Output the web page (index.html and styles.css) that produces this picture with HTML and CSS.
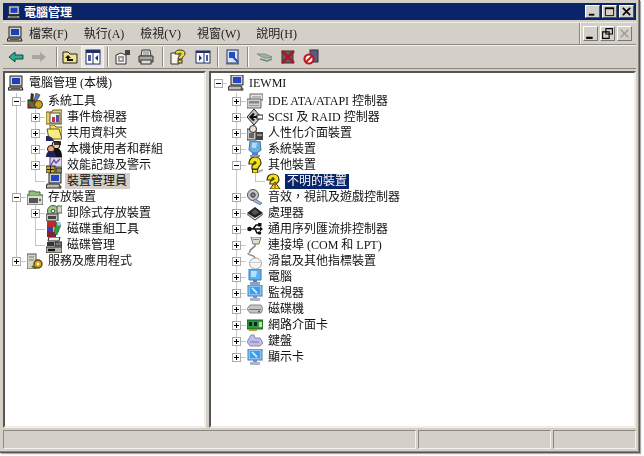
FILE: index.html
```html
<!DOCTYPE html>
<html lang="zh-Hant">
<head>
<meta charset="utf-8">
<title>電腦管理</title>
<link rel="stylesheet" href="styles.css">
</head>
<body>
<svg class="defs" xmlns="http://www.w3.org/2000/svg">
  <symbol id="i-comp" viewBox="0 0 16 16"><rect x="2" y="1" width="12" height="10" fill="#d4d0c8" stroke="#222"/><rect x="4" y="3" width="8" height="6" fill="#1a3fc0"/><path d="M1 12h13l1 3H0z" fill="#b8b4ac" stroke="#222"/><path d="M3 13.500h9" stroke="#555"/></symbol>
  <symbol id="i-tools" viewBox="0 0 16 16"><rect x="1" y="7" width="8" height="8" fill="#b5302a" stroke="#222"/><path d="M4 0l3 1-1 8-3-1z" fill="#333"/><path d="M9 0l4 2-4 7-2-1z" fill="#5a7fa8" stroke="#222" stroke-width=".6"/><circle cx="11.500" cy="11.500" r="4" fill="#c6a21e" stroke="#333"/><path d="M2 9l5 5" stroke="#2c8a3c" stroke-width="2.400"/></symbol>
  <symbol id="i-event" viewBox="0 0 16 16"><path d="M0 3h6l1-2h9v14H0z" fill="#e6cf6a" stroke="#6b5a1c"/><rect x="4" y="4" width="10" height="10" fill="#f4f4f0" stroke="#555"/><rect x="6" y="8" width="3" height="5" fill="#c03838"/><rect x="10" y="6" width="3" height="7" fill="#5d4aa0"/></symbol>
  <symbol id="i-share" viewBox="0 0 16 16"><path d="M4 0h4l2 2h6v10H4z" fill="#f2e05e" stroke="#6b5a1c"/><path d="M1 4h12l3 10H3z" fill="#f6ea82" stroke="#6b5a1c"/><path d="M0 11c5 0 7 2 8 5H0z" fill="#1c2c6c"/></symbol>
  <symbol id="i-users" viewBox="0 0 16 16"><circle cx="10" cy="4" r="4" fill="#f1c9a0" stroke="#111"/><path d="M5 16c0-7 2-9 5-9s6 2 6 9z" fill="#111"/><circle cx="5" cy="8" r="3.500" fill="#e3a878" stroke="#111"/><path d="M0 16c0-4 2-6 5-6s5 2 5 6z" fill="#20205c"/><path d="M8 0h7v4H8z" fill="#111" opacity=".8"/></symbol>
  <symbol id="i-perf" viewBox="0 0 16 16"><rect x="4" y="0" width="12" height="10" fill="#dcd6ee" stroke="#4a3f86"/><path d="M5 8l3-5 2 3 4-4" stroke="#6a3fa0" fill="none" stroke-width="1.300"/><rect x="0" y="9" width="9" height="7" fill="#c8a82a" stroke="#222"/><path d="M1 12.500h7M4.500 9v7" stroke="#222"/><path d="M10 11h6v5h-6z" fill="#8a8a52" stroke="#333"/></symbol>
  <symbol id="i-dev" viewBox="0 0 16 16"><rect x="3" y="0" width="12" height="10" fill="#d4d0c8" stroke="#222"/><rect x="5" y="2" width="8" height="6" fill="#2244c8"/><path d="M1 11h12l2 4H0z" fill="#c0bcb4" stroke="#222"/><circle cx="14" cy="14" r="1.500" fill="#555"/></symbol>
  <symbol id="i-store" viewBox="0 0 16 16"><rect x="0" y="6" width="16" height="10" fill="#dcdcd4" stroke="#444"/><path d="M2 6V2h5l2 1h4v3" fill="#8fc07a" stroke="#4a6d3a"/><rect x="2" y="9" width="9" height="5" fill="#555"/><circle cx="13" cy="11" r="1.200" fill="#2c8a3c"/></symbol>
  <symbol id="i-remov" viewBox="0 0 16 16"><circle cx="7" cy="6" r="5.500" fill="#9fcc88" stroke="#3a5a3a"/><circle cx="7" cy="6" r="1.800" fill="#fff" stroke="#444"/><rect x="0" y="9" width="12" height="7" fill="#c4c4bc" stroke="#333"/><rect x="2" y="11" width="8" height="3" fill="#444"/><path d="M11 1h5v7h-5z" fill="#d8d8d0" stroke="#555"/></symbol>
  <symbol id="i-defrag" viewBox="0 0 16 16"><rect x="1" y="0" width="9" height="6" fill="#c0282c"/><rect x="1" y="6" width="6" height="5" fill="#2c40b0"/><rect x="7" y="6" width="6" height="5" fill="#e0c020"/><rect x="1" y="11" width="9" height="5" fill="#8c1c30"/><path d="M10 1l5 3-4 10-3-1z" fill="#2c9c48" stroke="#333" stroke-width=".5"/><circle cx="13" cy="3" r="2" fill="#9cc4f0"/></symbol>
  <symbol id="i-disk" viewBox="0 0 16 16"><path d="M3 0h11l-1 4H2z" fill="#eee" stroke="#222"/><rect x="1" y="5" width="7" height="4" fill="#333"/><rect x="9" y="5" width="7" height="4" fill="#777" stroke="#222"/><path d="M0 10h16v6H0z" fill="#b8b4a8" stroke="#222"/><path d="M2 13h7" stroke="#111" stroke-width="2.400"/></symbol>
  <symbol id="i-serv" viewBox="0 0 16 16"><rect x="0" y="1" width="9" height="15" fill="#d8d4c4" stroke="#555"/><path d="M2 4h5M2 7h5" stroke="#777"/><circle cx="11" cy="11" r="4" fill="#d8a818" stroke="#5a4410" stroke-width="1.400"/><circle cx="11" cy="11" r="1.200" fill="#fff"/><path d="M5 13l4 3" stroke="#4a6d3a" stroke-width="2"/></symbol>
  <symbol id="i-ide" viewBox="0 0 16 16"><path d="M3 1h13v6H3z" fill="#e4e4e4" stroke="#666"/><path d="M5 4h9" stroke="#888"/><path d="M0 6h14v9H0z" fill="#d0d0d0" stroke="#666"/><rect x="2" y="8" width="10" height="2.500" fill="#888"/><path d="M2 12.500h10" stroke="#999"/></symbol>
  <symbol id="i-scsi" viewBox="0 0 16 16"><path d="M7 0l7 8-7 8-7-8z" fill="#c8c8c8" stroke="#222"/><path d="M4 8h11M7 4.500L3.500 8 7 11.500" stroke="#111" stroke-width="2.200" fill="none"/><rect x="10" y="6" width="6" height="4" fill="#f4f4f4" stroke="#222"/></symbol>
  <symbol id="i-hid" viewBox="0 0 16 16"><rect x="0" y="4" width="9" height="11" fill="#c8c8c0" stroke="#333"/><circle cx="6" cy="4" r="3.500" fill="#e4e4dc" stroke="#333"/><rect x="9" y="7" width="7" height="8" fill="#444"/><path d="M10 10h5" stroke="#ddd"/><path d="M2 8h5v5H2z" fill="#666"/></symbol>
  <symbol id="i-sys" viewBox="0 0 16 16"><path d="M3 0h10l1 9-4 3H6L2 9z" fill="#6aaee8" stroke="#3d6fa8"/><path d="M5 2h5l-1 5H5z" fill="#b4dcf8"/><rect x="5" y="12" width="6" height="2" fill="#5a7ec0"/><rect x="3" y="14" width="10" height="2" fill="#8a94a8"/></symbol>
  <symbol id="i-q" viewBox="0 0 16 16"><path d="M2 6c0-4 3-6 6-6s6 2 6 6c0 3-3 3-3 6H5V9c1-2 4-2 4-3S7 4 7 6v1H2z" fill="#f2e21c" stroke="#3a3400" stroke-width="1.200"/><rect x="5.500" y="12.500" width="5" height="3.500" fill="#f2e21c" stroke="#3a3400"/><path d="M10 14l6-2v2l-5 2z" fill="#888" opacity=".7"/></symbol>
  <symbol id="i-unk" viewBox="0 0 16 16"><path d="M1 7c0-4 3-6 6-6s6 2 6 6c0 2-2 3-3 4H4V9c1-2 4-2 4-3S6 4 6 6v1z" fill="#f2e21c" stroke="#3a3400" stroke-width="1.200"/><path d="M4 16l5-7 5 7z" fill="#f2e21c" stroke="#3a3400"/><path d="M9 11v2.500M9 14.200v1" stroke="#b01010" stroke-width="1.300"/></symbol>
  <symbol id="i-audio" viewBox="0 0 16 16"><circle cx="6" cy="6" r="5.500" fill="#c4c4cc" stroke="#555"/><circle cx="6" cy="6" r="2.200" fill="#888" stroke="#333"/><path d="M8 10l7 4-2 2-7-4z" fill="#8cb4e4" stroke="#555" stroke-width=".6"/></symbol>
  <symbol id="i-cpu" viewBox="0 0 16 16"><path d="M8 2l8 6-8 5-8-5z" fill="#222"/><path d="M8 4l4 3.500-4 2.500-4-2.500z" fill="#555"/><path d="M0 9l8 6 8-6" stroke="#666" fill="none" stroke-width="1.200"/></symbol>
  <symbol id="i-usb" viewBox="0 0 16 16"><path d="M2 8h12M6 8l3-4h3M8 8l2 4h2" stroke="#111" stroke-width="1.600" fill="none"/><circle cx="2.500" cy="8" r="2.300" fill="#111"/><rect x="11" y="2" width="3.500" height="3.500" fill="#111"/><circle cx="12.500" cy="12" r="1.800" fill="#111"/><path d="M13 5.500l3 2.500-3 2.500z" fill="#111"/></symbol>
  <symbol id="i-port" viewBox="0 0 16 16"><path d="M4 0h10l-2 7H6z" fill="#e0e0c8" stroke="#777"/><path d="M6 2.500h6" stroke="#888"/><path d="M8.500 7c0 5-6 3-6 9" stroke="#888" fill="none" stroke-width="1.500"/></symbol>
  <symbol id="i-mouse" viewBox="0 0 16 16"><path d="M1 0c0 3 6 1 7 5" stroke="#888" fill="none" stroke-width="1.300"/><ellipse cx="8.500" cy="10.500" rx="6" ry="5.500" fill="#f6f6f6" stroke="#a0a0a0"/><path d="M3 9.500h11" stroke="#ccc"/></symbol>
  <symbol id="i-pc" viewBox="0 0 16 16"><path d="M2 0h12v11H2z" fill="#5cb0f0" stroke="#3d7ab8"/><path d="M4 2h6l-1 6H4z" fill="#b8e0fa"/><rect x="6" y="11" width="4" height="2" fill="#5a7ec0"/><rect x="3" y="13" width="10" height="3" fill="#8ca0c0"/></symbol>
  <symbol id="i-mon" viewBox="0 0 16 16"><rect x="1" y="0" width="14" height="11" fill="#8cc4f0" stroke="#4a7cb0"/><rect x="3" y="2" width="10" height="7" fill="#3c9ce8"/><path d="M5 3l5 5" stroke="#c8e8fc" stroke-width="1.800"/><rect x="6" y="11" width="4" height="2" fill="#7a94b8"/><rect x="3" y="13" width="10" height="3" fill="#a8b4c8"/></symbol>
  <symbol id="i-drive" viewBox="0 0 16 16"><path d="M3 4h11l2 4-2 4H3L0 8z" fill="#c4c4c0" stroke="#888"/><path d="M2 8.500h12" stroke="#777"/><circle cx="12" cy="10.500" r="1" fill="#555"/></symbol>
  <symbol id="i-net" viewBox="0 0 16 16"><rect x="0" y="3" width="16" height="9" fill="#2f9a3c" stroke="#1a5c24"/><rect x="2" y="5" width="3" height="4" fill="#123"/><rect x="7" y="5" width="3" height="4" fill="#123"/><rect x="12" y="5" width="3" height="5" fill="#c8e0a0"/><path d="M2 13h8" stroke="#b89a20" stroke-width="2"/></symbol>
  <symbol id="i-kbd" viewBox="0 0 16 16"><path d="M4 2h3l1 3h5l3 5-3 3H3L0 9z" fill="#c0bce8" stroke="#8a86b8"/><path d="M3 9h9" stroke="#7a76a8"/></symbol>
  <symbol id="i-back" viewBox="0 0 16 16"><path d="M1 8l6-5v3h8v4H7v3z" fill="#2fae8e" stroke="#0e4a3c"/></symbol>
  <symbol id="i-fwd" viewBox="0 0 16 16"><path d="M15 8L9 3v3H1v4h8v3z" fill="#a8a6a0"/></symbol>
  <symbol id="i-up" viewBox="0 0 16 16"><path d="M1 3h5l2 2h7v9H1z" fill="#f2e28a" stroke="#222"/><path d="M6 6l-3 3h2v3h6v-2H7V9h2z" fill="#111"/></symbol>
  <symbol id="i-tree" viewBox="0 0 16 16"><rect x="1" y="1" width="14" height="14" fill="#fff" stroke="#20306c"/><path d="M1 1h14v3H1z" fill="#20306c"/><path d="M8 2v13" stroke="#20306c"/><rect x="3" y="6" width="3" height="6" fill="#4a5a9c"/><path d="M13 6l-3 3 3 3z" fill="#20306c"/></symbol>
  <symbol id="i-props" viewBox="0 0 16 16"><path d="M1 6l5-2 5 2v9H1z" fill="#f4f4f0" stroke="#333"/><path d="M3 8h6M3 10h2M7 10h2M3 12h6" stroke="#444"/><rect x="10" y="1" width="5" height="5" fill="#444"/></symbol>
  <symbol id="i-print" viewBox="0 0 16 16"><path d="M4 1h8l1 6H3z" fill="#eee" stroke="#333"/><path d="M5 3h6M5 5h6" stroke="#777"/><path d="M1 7h14v6H1z" fill="#a8a8a4" stroke="#333"/><rect x="3" y="11" width="10" height="4" fill="#ddd" stroke="#333"/></symbol>
  <symbol id="i-help" viewBox="0 0 16 16"><path d="M1 4h8v11H1z" fill="#f4f4f0" stroke="#333"/><path d="M5 5c0-3 2-4 5-4s5 1 5 4c0 2-3 2-3 5H8c0-3 3-3 3-5s-2-1-2 0z" fill="#f2e21c" stroke="#333"/><rect x="8" y="11" width="4" height="3" fill="#f2e21c" stroke="#333"/></symbol>
  <symbol id="i-pane" viewBox="0 0 16 16"><rect x="1" y="2" width="14" height="12" fill="#fff" stroke="#20306c"/><path d="M1 2h14v2H1z" fill="#20306c"/><path d="M9 4v10" stroke="#20306c"/><path d="M4 6l3 3-3 3z" fill="#20306c"/><rect x="11" y="6" width="2" height="6" fill="#4a5a9c"/></symbol>
  <symbol id="i-scan" viewBox="0 0 16 16"><rect x="2" y="1" width="11" height="13" fill="#dce4f4" stroke="#20306c"/><path d="M4 3h6v6H4z" fill="#1a50c0"/><path d="M8 8l5 5" stroke="#1a50c0" stroke-width="2"/><path d="M1 14h13v1.500H1z" fill="#666"/></symbol>
  <symbol id="i-update" viewBox="0 0 16 16"><path d="M0 5h8l7 3-3 1H7z" fill="#9cb89c" stroke="#667" stroke-width=".6"/><path d="M3 10l7 2 5-2" stroke="#6a8a6a" stroke-width="1.500" fill="none"/></symbol>
  <symbol id="i-uninst" viewBox="0 0 16 16"><rect x="2" y="2" width="11" height="12" fill="#5c5c78" stroke="#333"/><path d="M2 2l12 12M14 2L2 14" stroke="#b01818" stroke-width="2.600"/></symbol>
  <symbol id="i-disable" viewBox="0 0 16 16"><rect x="7" y="1" width="8" height="12" fill="#5a5a86" stroke="#333"/><circle cx="6" cy="10" r="4.500" fill="#fff" stroke="#c01818" stroke-width="2.200"/><path d="M3 13l6-6" stroke="#c01818" stroke-width="2"/></symbol>
</svg>

<div class="window">
  <header class="titlebar">
    <svg class="ico title-ico"><use href="#i-comp"/></svg>
    <span class="title-text">電腦管理</span>
    <div class="caption">
      <span class="cbtn"><svg viewBox="0 0 12 12"><path d="M2 9.500h6" stroke="#000" stroke-width="2"/></svg></span>
      <span class="cbtn"><svg viewBox="0 0 12 12"><path d="M1.500 2.500h9v8h-9z" fill="none" stroke="#000"/><path d="M1 2.500h10" stroke="#000" stroke-width="2"/></svg></span>
      <span class="cbtn cbtn-close"><svg viewBox="0 0 12 12"><path d="M2 2l8 8M10 2l-8 8" stroke="#000" stroke-width="1.800"/></svg></span>
    </div>
  </header>

  <nav class="menubar">
    <svg class="ico menu-ico"><use href="#i-comp"/></svg>
    <span class="menu-item">檔案(F)</span>
    <span class="menu-item">執行(A)</span>
    <span class="menu-item">檢視(V)</span>
    <span class="menu-item">視窗(W)</span>
    <span class="menu-item">說明(H)</span>
    <div class="mdi">
      <span class="mbtn"><svg viewBox="0 0 12 12"><path d="M2 10h6" stroke="#000" stroke-width="2"/></svg></span>
      <span class="mbtn"><svg viewBox="0 0 12 12"><path d="M4.500 1.500h6v5h-6zM1.500 4.500h6v6h-6z" fill="#d4d0c8" stroke="#000"/></svg></span>
      <span class="mbtn"><svg viewBox="0 0 12 12"><path d="M2.500 2.500l7 7M9.500 2.500l-7 7" stroke="#a09c94" stroke-width="1.400"/></svg></span>
    </div>
  </nav>

  <div class="toolbar">
    <span class="tb"><svg class="ico"><use href="#i-back"/></svg></span>
    <span class="tb"><svg class="ico"><use href="#i-fwd"/></svg></span>
    <span class="tsep tsep-nav"></span>
    <span class="tb"><svg class="ico"><use href="#i-up"/></svg></span>
    <span class="tb tb-on"><svg class="ico"><use href="#i-tree"/></svg></span>
    <span class="tsep"></span>
    <span class="tb"><svg class="ico"><use href="#i-props"/></svg></span>
    <span class="tb"><svg class="ico"><use href="#i-print"/></svg></span>
    <span class="tsep tsep-print"></span>
    <span class="tb"><svg class="ico"><use href="#i-help"/></svg></span>
    <span class="tb tb-wide"><svg class="ico"><use href="#i-pane"/></svg></span>
    <span class="tsep tsep-pane"></span>
    <span class="tb"><svg class="ico"><use href="#i-scan"/></svg></span>
    <span class="tsep tsep-scan"></span>
    <span class="tb"><svg class="ico"><use href="#i-update"/></svg></span>
    <span class="tb"><svg class="ico"><use href="#i-uninst"/></svg></span>
    <span class="tb"><svg class="ico"><use href="#i-disable"/></svg></span>
  </div>

  <main class="panes">
    <section class="pane pane-left">
      <div class="row"><svg class="ico"><use href="#i-comp"/></svg><span class="label">電腦管理 (本機)</span></div>
      <div class="row"><span class="tw tee"><i class="exp minus"></i></span><svg class="ico"><use href="#i-tools"/></svg><span class="label">系統工具</span></div>
      <div class="row"><span class="tw pass"></span><span class="tw tee"><i class="exp plus"></i></span><svg class="ico"><use href="#i-event"/></svg><span class="label">事件檢視器</span></div>
      <div class="row"><span class="tw pass"></span><span class="tw tee"><i class="exp plus"></i></span><svg class="ico"><use href="#i-share"/></svg><span class="label">共用資料夾</span></div>
      <div class="row"><span class="tw pass"></span><span class="tw tee"><i class="exp plus"></i></span><svg class="ico"><use href="#i-users"/></svg><span class="label">本機使用者和群組</span></div>
      <div class="row"><span class="tw pass"></span><span class="tw tee"><i class="exp plus"></i></span><svg class="ico"><use href="#i-perf"/></svg><span class="label">效能記錄及警示</span></div>
      <div class="row"><span class="tw pass"></span><span class="tw ell"></span><svg class="ico"><use href="#i-dev"/></svg><span class="label label-dim">裝置管理員</span></div>
      <div class="row"><span class="tw tee"><i class="exp minus"></i></span><svg class="ico"><use href="#i-store"/></svg><span class="label">存放裝置</span></div>
      <div class="row"><span class="tw pass"></span><span class="tw tee"><i class="exp plus"></i></span><svg class="ico"><use href="#i-remov"/></svg><span class="label">卸除式存放裝置</span></div>
      <div class="row"><span class="tw pass"></span><span class="tw tee"></span><svg class="ico"><use href="#i-defrag"/></svg><span class="label">磁碟重組工具</span></div>
      <div class="row"><span class="tw pass"></span><span class="tw ell"></span><svg class="ico"><use href="#i-disk"/></svg><span class="label">磁碟管理</span></div>
      <div class="row"><span class="tw ell"><i class="exp plus"></i></span><svg class="ico"><use href="#i-serv"/></svg><span class="label">服務及應用程式</span></div>
    </section>
    <section class="pane pane-right">
      <div class="row"><span class="tw tw-first stub"><i class="exp minus"></i></span><svg class="ico"><use href="#i-dev"/></svg><span class="label">IEWMI</span></div>
      <div class="row"><span class="tw tw-first"></span><span class="tw tee"><i class="exp plus"></i></span><svg class="ico"><use href="#i-ide"/></svg><span class="label">IDE ATA/ATAPI 控制器</span></div>
      <div class="row"><span class="tw tw-first"></span><span class="tw tee"><i class="exp plus"></i></span><svg class="ico"><use href="#i-scsi"/></svg><span class="label">SCSI 及 RAID 控制器</span></div>
      <div class="row"><span class="tw tw-first"></span><span class="tw tee"><i class="exp plus"></i></span><svg class="ico"><use href="#i-hid"/></svg><span class="label">人性化介面裝置</span></div>
      <div class="row"><span class="tw tw-first"></span><span class="tw tee"><i class="exp plus"></i></span><svg class="ico"><use href="#i-sys"/></svg><span class="label">系統裝置</span></div>
      <div class="row"><span class="tw tw-first"></span><span class="tw tee"><i class="exp minus"></i></span><svg class="ico"><use href="#i-q"/></svg><span class="label">其他裝置</span></div>
      <div class="row"><span class="tw tw-first"></span><span class="tw pass"></span><span class="tw ell"></span><svg class="ico"><use href="#i-unk"/></svg><span class="label label-sel">不明的裝置</span></div>
      <div class="row"><span class="tw tw-first"></span><span class="tw tee"><i class="exp plus"></i></span><svg class="ico"><use href="#i-audio"/></svg><span class="label">音效，視訊及遊戲控制器</span></div>
      <div class="row"><span class="tw tw-first"></span><span class="tw tee"><i class="exp plus"></i></span><svg class="ico"><use href="#i-cpu"/></svg><span class="label">處理器</span></div>
      <div class="row"><span class="tw tw-first"></span><span class="tw tee"><i class="exp plus"></i></span><svg class="ico"><use href="#i-usb"/></svg><span class="label">通用序列匯流排控制器</span></div>
      <div class="row"><span class="tw tw-first"></span><span class="tw tee"><i class="exp plus"></i></span><svg class="ico"><use href="#i-port"/></svg><span class="label">連接埠 (COM 和 LPT)</span></div>
      <div class="row"><span class="tw tw-first"></span><span class="tw tee"><i class="exp plus"></i></span><svg class="ico"><use href="#i-mouse"/></svg><span class="label">滑鼠及其他指標裝置</span></div>
      <div class="row"><span class="tw tw-first"></span><span class="tw tee"><i class="exp plus"></i></span><svg class="ico"><use href="#i-pc"/></svg><span class="label">電腦</span></div>
      <div class="row"><span class="tw tw-first"></span><span class="tw tee"><i class="exp plus"></i></span><svg class="ico"><use href="#i-mon"/></svg><span class="label">監視器</span></div>
      <div class="row"><span class="tw tw-first"></span><span class="tw tee"><i class="exp plus"></i></span><svg class="ico"><use href="#i-drive"/></svg><span class="label">磁碟機</span></div>
      <div class="row"><span class="tw tw-first"></span><span class="tw tee"><i class="exp plus"></i></span><svg class="ico"><use href="#i-net"/></svg><span class="label">網路介面卡</span></div>
      <div class="row"><span class="tw tw-first"></span><span class="tw tee"><i class="exp plus"></i></span><svg class="ico"><use href="#i-kbd"/></svg><span class="label">鍵盤</span></div>
      <div class="row"><span class="tw tw-first"></span><span class="tw ell"><i class="exp plus"></i></span><svg class="ico"><use href="#i-mon"/></svg><span class="label">顯示卡</span></div>
    </section>
  </main>

  <footer class="statusbar">
    <span class="seg seg-a"></span>
    <span class="seg seg-b"></span>
    <span class="seg seg-c"></span>
  </footer>
</div>
</body>
</html>
```

FILE: styles.css
```css
* { box-sizing: border-box; }
html, body { margin: 0; padding: 0; background: #fff; }
body { width: 644px; height: 456px; overflow: hidden; }
.defs { position: absolute; width: 0; height: 0; }

.window {
  width: 640px;
  height: 453px;
  padding: 3px;
  background: #d4d0c8;
  border-right: 1px solid #555;
  border-bottom: 1px solid #555;
  box-shadow: inset -1px -1px 0 #8a8880, 1px 1px 1px #aaa;
  display: flex;
  flex-direction: column;
  font: 12px/16px "Liberation Serif", "Noto Sans CJK TC", serif;
  color: #000;
  filter: blur(0.55px);
}

.ico { width: 16px; height: 16px; flex: none; display: block; }

/* title bar */
.titlebar {
  height: 17px;
  background: #0a246a;
  display: flex;
  align-items: center;
  padding-left: 4px;
  flex: none;
}
.title-ico { width: 14px; height: 14px; }
.title-text { color: #fff; font-weight: bold; margin-left: 3px; font-family: "Noto Sans CJK TC", sans-serif; }
.caption { margin-left: auto; display: flex; gap: 2px; padding-right: 2px; }
.cbtn {
  width: 15px;
  height: 13px;
  background: #d4d0c8;
  border: 1px solid;
  border-color: #fff #555 #555 #fff;
  display: block;
}
.cbtn svg, .mbtn svg { display: block; width: 100%; height: 100%; }

/* menu bar */
.menubar {
  height: 23px;
  margin-top: 2px;
  display: flex;
  align-items: center;
  padding-left: 4px;
  flex: none;
  border-top: 1px solid #efece6;
  border-bottom: 1px solid #8a8880;
}
.menu-ico { margin-right: 6px; }
.menu-item { margin-right: 16px; white-space: nowrap; color: #222; }
.mdi {
  margin-left: auto;
  display: flex;
  gap: 2px;
  height: 100%;
  align-items: center;
  padding: 0 4px 0 3px;
  border-left: 1px solid #8a8880;
  box-shadow: inset 1px 0 0 #f4f2ec;
}
.mbtn {
  width: 15px;
  height: 15px;
  background: #d4d0c8;
  border: 1px solid;
  border-color: #fff #777 #777 #fff;
  display: block;
}

/* toolbar */
.toolbar {
  height: 24px;
  display: flex;
  align-items: center;
  padding-left: 1px;
  flex: none;
  border-top: 1px solid #f4f2ec;
  border-bottom: 1px solid #8a8880;
}
.tb {
  width: 23px;
  height: 22px;
  display: flex;
  align-items: center;
  justify-content: center;
  flex: none;
}
.tb-wide { width: 27px; }
.tb-on {
  background: #e9e7e2;
  box-shadow: inset 0 0 0 1px #f4f2ec;
}
.tsep {
  width: 2px;
  height: 20px;
  margin: 0 2px 0 3px;
  background: linear-gradient(90deg, #8a8880 50%, #fff 50%);
  flex: none;
}
.tsep-nav { margin: 0 0 0 6px; }
.tsep-print { margin: 0 2px 0 5px; }
.tsep-pane { margin: 0 2px 0 1px; }
.tsep-scan { margin: 0 4px 0 3px; }

/* panes */
.panes {
  flex: 1;
  min-height: 0;
  margin-top: 2px;
  display: flex;
  gap: 3px;
}
.pane {
  background: #fff;
  border: 2px solid;
  border-color: #555 #f0eee8 #f0eee8 #555;
  padding-top: 2px;
  overflow: hidden;
}
.pane-left { width: 203px; padding-left: 2px; flex: none; }
.pane-right { flex: 1; }

.row { display: flex; align-items: center; height: 16px; white-space: nowrap; }
.row:first-child { height: 18px; align-items: flex-start; }
.row > .ico { margin-left: 1px; }

.tw { width: 19px; height: 16px; flex: none; display: block; position: relative; }
.tw-first { width: 16px; }
.pass { background: linear-gradient(#c6c6c6, #c6c6c6) 9px 0 / 1px 100% no-repeat; }
.tee {
  background:
    linear-gradient(#c6c6c6, #c6c6c6) 9px 0 / 1px 100% no-repeat,
    linear-gradient(#c6c6c6, #c6c6c6) 9px 8px / 10px 1px no-repeat;
}
.ell {
  background:
    linear-gradient(#c6c6c6, #c6c6c6) 9px 0 / 1px 9px no-repeat,
    linear-gradient(#c6c6c6, #c6c6c6) 9px 8px / 10px 1px no-repeat;
}
.stub { background: linear-gradient(#c6c6c6, #c6c6c6) 8px 8px / 8px 1px no-repeat; }

.exp {
  position: absolute;
  left: 5px;
  top: 4px;
  width: 9px;
  height: 9px;
  background: #fff;
  border: 1px solid #aaa;
}
.stub .exp { left: 3px; }
.exp::before {
  content: "";
  position: absolute;
  left: 1px;
  top: 3px;
  width: 5px;
  height: 1px;
  background: #000;
}
.plus::after {
  content: "";
  position: absolute;
  left: 3px;
  top: 1px;
  width: 1px;
  height: 5px;
  background: #000;
}

.label { margin-left: 3px; padding: 0 2px; height: 16px; color: #111; }
.label-dim { background: #d4d0c8; padding-right: 3px; }
.label-sel { background: #0a246a; color: #fff; height: 15px; line-height: 15px; }

/* status bar */
.statusbar {
  height: 19px;
  margin-top: 2px;
  display: flex;
  gap: 2px;
  flex: none;
}
.seg {
  display: block;
  height: 100%;
  border: 1px solid;
  border-color: #8a8880 #f4f2ec #f4f2ec #8a8880;
}
.seg-a { width: 413px; }
.seg-b { width: 133px; }
.seg-c { flex: 1; }
```
